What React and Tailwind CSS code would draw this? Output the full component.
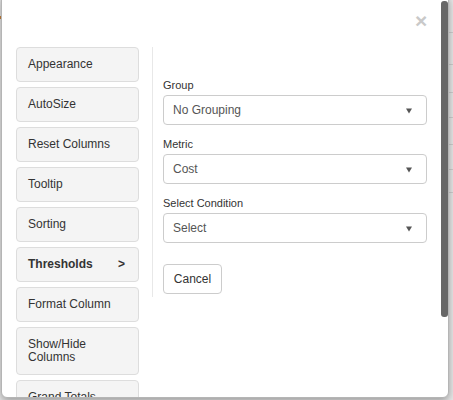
import React from "react";

const items = [
  "Appearance",
  "AutoSize",
  "Reset Columns",
  "Tooltip",
  "Sorting",
  "Thresholds",
  "Format Column",
  "Show/Hide Columns",
  "Grand Totals",
];

function Select({ value }) {
  return (
    <div className="relative h-[30px] w-[264px] rounded-[4px] border border-[#cccccc] bg-white flex items-center pl-[9px] text-[12px] text-[#555555]">
      <span>{value}</span>
      <svg className="absolute right-[14px] top-[12px]" width="6" height="6" viewBox="0 0 6 6">
        <path d="M0 0.5 L6 0.5 L3 5.5 Z" fill="#555555" />
      </svg>
    </div>
  );
}

function Field({ label, value, first }) {
  return (
    <div className={first ? "" : "mt-[12px]"}>
      <div className="text-[11px] leading-[14px] text-[#333333] mb-[3px]">{label}</div>
      <Select value={value} />
    </div>
  );
}

export default function App() {
  return (
    <div
      className="relative w-[453px] h-[400px] overflow-hidden bg-[#e9e9e9]"
      style={{ fontFamily: '"Liberation Sans", Arial, sans-serif' }}
    >
      {/* background rows at right edge */}
      <div className="absolute right-0 top-0 w-[5px] h-full flex flex-col">
        {[33, 32, 28, 25, 27, 25, 23].map((h, i) => (
          <div key={i} className="border-b border-[#cfcfcf]" style={{ height: h }} />
        ))}
      </div>
      <div className="absolute left-0 top-[16px] w-[2px] h-[3px] bg-[#c8823c]" />

      {/* modal */}
      <div className="absolute left-[1px] top-[-6px] w-[448px] h-[404px] rounded-[6px] border border-[#b5b5b5] bg-white shadow-[0_3px_9px_rgba(0,0,0,0.35)] overflow-hidden">
        <div className="relative h-[52px]">
          <span className="absolute left-[413px] top-[15px] text-[21px] font-bold leading-[21px] text-[#c9c9c9]">×</span>
        </div>
        <div className="flex items-start pl-[14px]">
          <div className="w-[123px] flex flex-col gap-[5px]">
            {items.map((t) => (
              <div
                key={t}
                className={
                  "rounded-[4px] border border-[#dddddd] bg-[#f4f4f4] px-[11px] py-[10px] text-[12px] leading-[13px] text-[#333333] flex justify-between " +
                  (t === "Thresholds" ? "font-bold" : "")
                }
              >
                <span className={t === "Show/Hide Columns" ? "w-[80px]" : ""}>{t}</span>
                {t === "Thresholds" && <span className="mr-[2px]">&gt;</span>}
              </div>
            ))}
          </div>
          <div className="ml-[13px] border-l border-[#e8e8e8] pl-[10px] pt-[31px] pb-[3px]">
            <Field label="Group" value="No Grouping" first />
            <Field label="Metric" value="Cost" />
            <Field label="Select Condition" value="Select" />
            <button className="mt-[21px] h-[30px] w-[59px] rounded-[4px] border border-[#cccccc] bg-white text-[12px] text-[#333333]">
              Cancel
            </button>
          </div>
        </div>
        {/* scrollbar */}
        <div className="absolute right-[0px] top-[6px] w-[7px] h-[316px] rounded-[3px] bg-[#676767]" />
      </div>
    </div>
  );
}
